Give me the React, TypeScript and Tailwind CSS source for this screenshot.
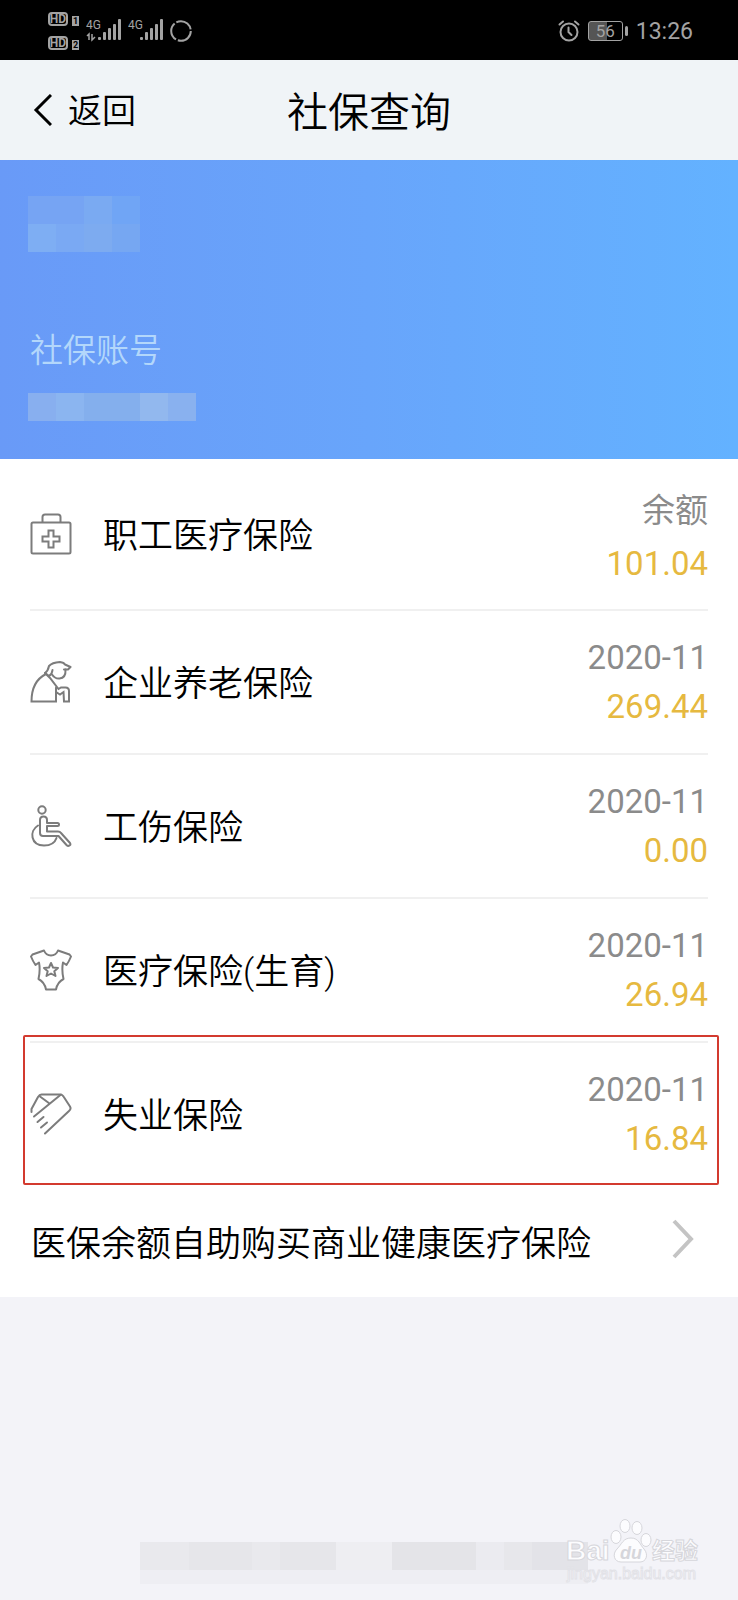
import type { ReactNode } from "react";

type InsuranceItem = {
  id: string;
  name: string;
  label: string;
  amount: string;
  icon: ReactNode;
  highlighted?: boolean;
};

function LineIcon({ children }: { children: ReactNode }) {
  return (
    <svg
      viewBox="0 0 42 42"
      className="size-[42px] shrink-0 text-[#7c7c7c]"
      fill="none"
      stroke="currentColor"
      strokeWidth="2"
      strokeLinecap="round"
      strokeLinejoin="round"
      aria-hidden="true"
    >
      {children}
    </svg>
  );
}

const items: InsuranceItem[] = [
  {
    id: "medical",
    name: "职工医疗保险",
    label: "余额",
    amount: "101.04",
    icon: (
      <LineIcon>
        <rect x="1.5" y="9.5" width="39" height="31" rx="1.5" />
        <path d="M12.5 9V4q0-2.5 2.5-2.5h13q2.5 0 2.5 2.5v5" />
        <path d="M18.5 17.5h5v6h6v5h-6v6h-5v-6h-6v-5h6z" strokeLinejoin="miter" />
      </LineIcon>
    ),
  },
  {
    id: "pension",
    name: "企业养老保险",
    label: "2020-11",
    amount: "269.44",
    icon: (
      <LineIcon>
        <path
          d="M16 13C8 17 1.5 26 1.5 40.5H26V31l4 2.5 3.5-2.5.5 9.5h5V30q0-3.5-3.5-3.5H31L28.5 28 20 17z"
          strokeLinejoin="miter"
        />
        <path d="M26 31v-4.500" />
        <path d="M15 12Q18 10 19 5q3-3.500 11-4 4 .5 5 2.500l5.500 2.500-2.500 2.500h-4" />
        <path d="M15 12l4 3q3-1.500 3.500-6" />
        <path d="M35.500 8.500q.5 8.500-6 9-4.500.5-7.500-4" />
      </LineIcon>
    ),
  },
  {
    id: "injury",
    name: "工伤保险",
    label: "2020-11",
    amount: "0.00",
    icon: (
      <LineIcon>
        <circle cx="12" cy="5" r="3.7" />
        <path d="M10 15q0-3.5 3.5-3.5T17 15v3h10.5q1.5 0 1.5 1.5T27.5 21H17v5.5h11q2 0 3 1.5l9 10q1 1.5-.5 2.5t-3-.5L28.5 31H13q-3 0-3-3z" />
        <path d="M8 20.5C-1 26 .5 40.5 14 40.5c6.5 0 11-3 12.5-7.5" />
      </LineIcon>
    ),
  },
  {
    id: "maternity",
    name: "医疗保险(生育)",
    label: "2020-11",
    amount: "26.94",
    icon: (
      <LineIcon>
        <path d="M14 1.5 2.5 5.5 1 7.5q2 5 4.5 8.500L9 13.500Q10.500 21 8.500 30q6 3 7.500 10.500h10Q27.500 33 33.500 30 31.500 21 33 13.500l3.500 2.500Q39 12.500 41 7.500l-1.500-2L28 1.500q-2 5-7 5t-7-5z" />
        <path d="m21 14 2 4.5 5 .5-3.7 3.2L25.5 27 21 24.5 16.5 27l1.200-4.800L14 19l5-.5z" />
      </LineIcon>
    ),
  },
  {
    id: "unemployment",
    name: "失业保险",
    label: "2020-11",
    amount: "16.84",
    highlighted: true,
    icon: (
      <LineIcon>
        <path d="M1.5 19v-3L8 4q1.5-2.500 3.500-2.500H30q2.500 0 3.500 2L40 13.500q1.500 2.500-1 4.500L15 40.500" />
        <path d="M4 23.5 31 1.5M10 3.5l9.500 7M7.500 29l6-5M11 34.500l6-5" />
      </LineIcon>
    ),
  },
];

function HdBadge({ slot }: { slot: string }) {
  return (
    <span className="flex items-end gap-1">
      <span className="flex h-3.5 w-5 items-center justify-center rounded-[4px] border-2 border-current text-[12px] leading-none font-bold">
        HD
      </span>
      <span className="flex h-2.5 w-[7px] items-center justify-center bg-current text-[9px] leading-none font-bold">
        <span className="text-black">{slot}</span>
      </span>
    </span>
  );
}

function Signal({ data = false }: { data?: boolean }) {
  return (
    <svg viewBox="0 -4 35 32" className="h-8 w-[35px]" fill="currentColor" aria-hidden="true">
      <text
        x="0"
        y="10"
        fontSize="12"
        fontFamily="'Liberation Sans Narrow', Roboto, sans-serif"
      >
        4G
      </text>
      {data && (
        <path
          d="M1 17l2-2v6M6 15v6l3-3"
          fill="none"
          stroke="currentColor"
          strokeWidth="1.5"
        />
      )}
      <rect x="12" y="18" width="3" height="3" rx="1" />
      <rect x="17" y="13" width="3" height="8" rx="1" />
      <rect x="22" y="9" width="3" height="12" rx="1" />
      <rect x="27" y="5" width="3" height="16" rx="1" />
      <rect x="32" y="0" width="3" height="21" rx="1" />
    </svg>
  );
}

function StatusBar() {
  return (
    <div className="flex h-15 items-center justify-between bg-black pt-0.5 pr-[45px] pl-12 text-[#a3a3a3]">
      <div className="flex items-center gap-[7px]">
        <div className="flex flex-col gap-2.5">
          <HdBadge slot="1" />
          <HdBadge slot="2" />
        </div>
        <Signal data />
        <Signal />
        <svg
          viewBox="0 0 22 22"
          className="size-[22px]"
          fill="none"
          stroke="currentColor"
          strokeWidth="2"
          aria-hidden="true"
        >
          <circle cx="11" cy="11" r="9.8" strokeDasharray="18.5 2" />
        </svg>
      </div>
      <div className="flex items-center gap-2">
        <svg
          viewBox="0 0 22 22"
          className="size-[22px]"
          fill="none"
          stroke="currentColor"
          strokeWidth="2"
          strokeLinecap="round"
          aria-hidden="true"
        >
          <circle cx="11" cy="12" r="8.5" />
          <path d="M10.5 7.5V12l3 3M1.5 4.5 5 1.5M20.5 4.5 17 1.5" />
        </svg>
        <div className="flex items-center gap-0.5">
          <span className="flex h-5 w-[35px] items-center justify-center rounded-[3px] border border-current bg-linear-to-r from-[#555555] from-55% to-black to-55% text-[17px] leading-none">
            56
          </span>
          <span className="h-2.5 w-[3px] rounded-sm bg-current" />
        </div>
        <span className="text-[23px] leading-none">13:26</span>
      </div>
    </div>
  );
}

function InsuranceRow({ item }: { item: InsuranceItem }) {
  return (
    <li className="group relative flex h-36 items-center border-b-2 border-[#f0f0f0] first:h-[152px] last:border-transparent">
      {item.icon}
      <span className="mt-1.5 ml-[31px] text-[35px] leading-[50px] font-[350] text-black">
        {item.name}
      </span>
      <span className="ml-auto flex flex-col items-end text-[33px] leading-[49px] group-first:mt-1.5 group-first:gap-1">
        <span className="text-[#8b8b8b]">{item.label}</span>
        <span className="text-[#e6b940]">{item.amount}</span>
      </span>
      {item.highlighted && (
        <span className="pointer-events-none absolute -top-2 -right-[11px] bottom-0 -left-[7px] rounded-xs border-2 border-[#d33a2f]" />
      )}
    </li>
  );
}

function Watermark() {
  return (
    <svg
      viewBox="0 0 136 68"
      className="absolute right-9 bottom-4 h-17 w-[136px] overflow-visible"
      fill="#fcfcfe"
      stroke="#d6d6db"
      strokeWidth="1"
      aria-hidden="true"
    >
      <g fontFamily="'Liberation Sans', sans-serif" fontWeight="700">
        <text x="0" y="44" fontSize="28">
          Bai
        </text>
        <ellipse cx="50" cy="21" rx="5" ry="6.5" />
        <ellipse cx="59" cy="10" rx="5" ry="6.5" />
        <ellipse cx="71" cy="12" rx="5" ry="6.5" />
        <ellipse cx="80" cy="24" rx="5" ry="6.5" />
        <path d="M65 22c8 0 9 7 13 11 5 6 2 13-4 13H55c-7 0-9-8-4-13 5-5 6-11 14-11z" />
        <text x="54" y="43" fontSize="18" fontStyle="italic" fill="#d6d6db" stroke="none">
          du
        </text>
        <text x="86" y="43" fontSize="23" fontFamily="'Noto Sans CJK SC', sans-serif">
          经验
        </text>
      </g>
      <text x="1" y="63" fontSize="16" fontFamily="'Liberation Sans', sans-serif" stroke="#e2e2e7">
        jingyan.baidu.com
      </text>
    </svg>
  );
}

export default function App() {
  return (
    <div className="flex min-h-screen flex-col bg-[#f3f3f8] font-['Roboto','Noto_Sans_CJK_SC',sans-serif]">
      <StatusBar />
      <header className="grid h-25 grid-cols-[1fr_auto_1fr] items-center bg-[#f0f4f7] px-8 text-black">
        <button type="button" className="flex items-center gap-4 text-[34px] leading-[50px] font-[350]">
          <svg
            viewBox="0 0 20 32"
            className="h-8 w-5"
            fill="none"
            stroke="currentColor"
            strokeWidth="3"
            aria-hidden="true"
          >
            <path d="M19 1 4 16l15 15" />
          </svg>
          <span className="mt-0.5">返回</span>
        </button>
        <h1 className="mt-1.5 text-[41px] leading-[50px] font-[350]">社保查询</h1>
      </header>

      <section className="flex h-[299px] flex-col bg-linear-to-r from-[#699af7] via-[#68a5fb] to-[#63b2ff] px-7 pt-9">
        <div className="grid h-14 w-28 grid-cols-4 grid-rows-2">
          <span className="bg-[#76a4f3]" />
          <span className="bg-[#76a4f3]" />
          <span className="bg-[#7aaaf2]" />
          <span className="bg-[#70a5f5]" />
          <span className="bg-[#7eaef3]" />
          <span className="bg-[#7aa9f3]" />
          <span className="bg-[#7dabf0]" />
          <span className="bg-[#76a7f2]" />
        </div>
        <h2 className="mt-[74px] ml-0.5 text-[33px] leading-[50px] font-[350] text-[#b3d7fb]">
          社保账号
        </h2>
        <div className="mt-[17px] grid h-7 w-42 grid-cols-6">
          <span className="bg-[#88afef]" />
          <span className="bg-[#8bb5f0]" />
          <span className="bg-[#84afed]" />
          <span className="bg-[#84afed]" />
          <span className="bg-[#92b8ee]" />
          <span className="bg-[#89b1ef]" />
        </div>
      </section>

      <main className="bg-white">
        <ul className="mx-[30px]">
          {items.map((item) => (
            <InsuranceRow key={item.id} item={item} />
          ))}
        </ul>
        <a
          href="#buy"
          className="flex h-[110px] items-center justify-between pr-11 pl-[31px] text-[35px] leading-[50px] font-[350] text-black"
        >
          <span className="mt-1.5">医保余额自助购买商业健康医疗保险</span>
          <svg
            viewBox="0 0 22 40"
            className="mb-1.5 h-10 w-[22px] text-[#c4c4c4]"
            fill="none"
            stroke="currentColor"
            strokeWidth="4"
            aria-hidden="true"
          >
            <path d="m2 2 17 18L2 38" />
          </svg>
        </a>
      </main>

      <footer className="relative mt-auto pb-4 pl-[140px]">
        <div className="grid h-7 w-[448px] grid-cols-[49fr_63fr_28fr_56fr_56fr_84fr_28fr_28fr_56fr]">
          <span className="bg-[#e9e9ed]" />
          <span className="bg-[#e6e6ea]" />
          <span className="bg-[#e9e9ed]" />
          <span className="bg-[#e6e6ea]" />
          <span className="bg-[#eeeef2]" />
          <span className="bg-[#e4e4e8]" />
          <span className="bg-[#ebebf0]" />
          <span className="bg-[#e7e7eb]" />
          <span className="bg-[#e3e3e8]" />
        </div>
        <div className="h-3.5 w-[448px] bg-[#eeeef3]" />
        <Watermark />
      </footer>
    </div>
  );
}
